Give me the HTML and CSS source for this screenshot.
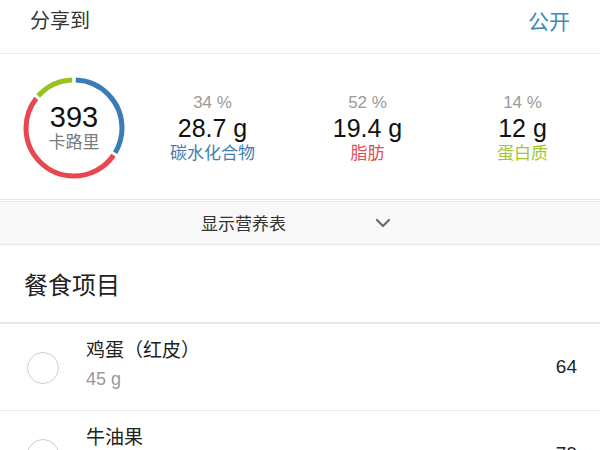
FILE: index.html
```html
<!DOCTYPE html>
<html lang="zh">
<head>
    <meta charset="UTF-8">
    <meta name="viewport" content="width=device-width, initial-scale=1.0">
    <title>餐食</title>
    <link rel="stylesheet" href="styles.css">
</head>
<body>
    <!-- Header -->
    <div class="share-bar">
        <span class="share-label">分享到</span>
        <span class="share-value">公开</span>
    </div>

    <!-- Calories + macros -->
    <div class="summary">
        <div class="ring-box">
            <svg class="ring" width="106" height="106" viewBox="0 0 106 106">
                <g transform="rotate(-90 53 53)">
                    <circle cx="53" cy="53" r="48" pathLength="100" class="seg seg-carb" stroke-dasharray="0 0.6 33 100"></circle>
                    <circle cx="53" cy="53" r="48" pathLength="100" class="seg seg-fat" stroke-dasharray="0 34.6 51 100"></circle>
                    <circle cx="53" cy="53" r="48" pathLength="100" class="seg seg-protein" stroke-dasharray="0 86.6 12.8 100"></circle>
                </g>
            </svg>
            <div class="ring-text">
                <div class="kcal">393</div>
                <div class="kcal-label">卡路里</div>
            </div>
        </div>
        <div class="macro">
            <div class="pct">34 %</div>
            <div class="grams">28.7 g</div>
            <div class="name carb">碳水化合物</div>
        </div>
        <div class="macro">
            <div class="pct">52 %</div>
            <div class="grams">19.4 g</div>
            <div class="name fat">脂肪</div>
        </div>
        <div class="macro">
            <div class="pct">14 %</div>
            <div class="grams">12 g</div>
            <div class="name protein">蛋白质</div>
        </div>
    </div>

    <!-- Nutrition table toggle -->
    <div class="toggle-bar">
        <span class="toggle-text">显示营养表</span>
        <svg class="chevron" width="16" height="10" viewBox="0 0 16 10">
            <path d="M2 2 L8 8 L14 2" fill="none" stroke="#6b6b6b" stroke-width="2.2" stroke-linecap="round" stroke-linejoin="round"/>
        </svg>
    </div>

    <h2 class="section-title">餐食项目</h2>

    <!-- Food items -->
    <div class="food-list">
        <div class="food-row">
            <span class="check"></span>
            <div class="food-info">
                <div class="food-name">鸡蛋（红皮）</div>
                <div class="food-amount">45 g</div>
            </div>
            <span class="food-kcal">64</span>
        </div>
        <div class="food-row">
            <span class="check"></span>
            <div class="food-info">
                <div class="food-name">牛油果</div>
                <div class="food-amount">50 g</div>
            </div>
            <span class="food-kcal">79</span>
        </div>
    </div>
</body>
</html>
```

FILE: styles.css
```css
body {
    margin: 0;
    background-color: #ffffff;
    font-family: "Liberation Sans", "Noto Sans CJK SC", sans-serif;
    color: #1a1a1a;
    overflow: hidden;
}

/* Header */
.share-bar {
    display: flex;
    justify-content: space-between;
    align-items: center;
    height: 53px;
    padding: 0 30px 0 30px;
    border-bottom: 1px solid #ececec;
}

.share-label {
    font-size: 20px;
    color: #333333;
    margin-top: -14px;
}

.share-value {
    font-size: 21px;
    color: #3d8bb5;
    margin-top: -14px;
}

/* Summary */
.summary {
    display: flex;
    align-items: center;
    height: 145px;
    border-bottom: 1px solid #e4e4e4;
}

.ring-box {
    position: relative;
    width: 106px;
    height: 106px;
    margin-left: 21px;
    margin-right: 8px;
    margin-top: 3px;
}

.ring {
    display: block;
}

.seg {
    fill: none;
    stroke-width: 5;
}

.seg-carb {
    stroke: #3a7cb5;
}

.seg-fat {
    stroke: #e9474f;
}

.seg-protein {
    stroke: #98c31f;
}

.ring-text {
    position: absolute;
    inset: 0;
    display: flex;
    flex-direction: column;
    align-items: center;
    justify-content: center;
}

.kcal {
    font-size: 29px;
    line-height: 30px;
    color: #111111;
}

.kcal-label {
    font-size: 17px;
    line-height: 22px;
    color: #7a7a7a;
}

.macro {
    flex: 1;
    display: flex;
    flex-direction: column;
    align-items: center;
    margin-top: 4px;
}

.pct {
    font-size: 17px;
    line-height: 21px;
    color: #9a9a9a;
}

.grams {
    font-size: 25px;
    line-height: 30px;
    color: #111111;
}

.name {
    font-size: 17px;
    line-height: 22px;
}

.carb {
    color: #3f80b0;
}

.fat {
    color: #df4f57;
}

.protein {
    color: #a5c630;
}

/* Toggle bar */
.toggle-bar {
    display: flex;
    align-items: center;
    height: 42px;
    background-color: #f8f8f8;
    border-bottom: 1px solid #e6e6e6;
    margin-top: 1px;
    border-top: 1px solid #e8e8e8;
}

.toggle-text {
    font-size: 17px;
    color: #333333;
    margin-left: 201px;
    margin-top: -2px;
}

.chevron {
    margin-left: 89px;
}

/* Section title */
.section-title {
    margin: 0;
    font-weight: normal;
    font-size: 24px;
    color: #222222;
    height: 77px;
    line-height: 82px;
    padding-left: 24px;
    border-bottom: 2px solid #e8e8e8;
}

/* Food rows */
.food-row {
    display: flex;
    align-items: center;
    height: 86px;
    border-bottom: 1px solid #e8e8e8;
    padding-right: 23px;
}

.check {
    width: 30px;
    height: 30px;
    border: 1.5px solid #cfcfcf;
    border-radius: 50%;
    margin-left: 27px;
    margin-right: 27px;
    margin-top: 2px;
}

.food-info {
    flex: 1;
}

.food-name {
    font-size: 19px;
    line-height: 28px;
    color: #222222;
    margin-top: -4px;
}

.food-amount {
    font-size: 18px;
    line-height: 28px;
    color: #9a9a9a;
}

.food-kcal {
    font-size: 19px;
    color: #222222;
}
```
